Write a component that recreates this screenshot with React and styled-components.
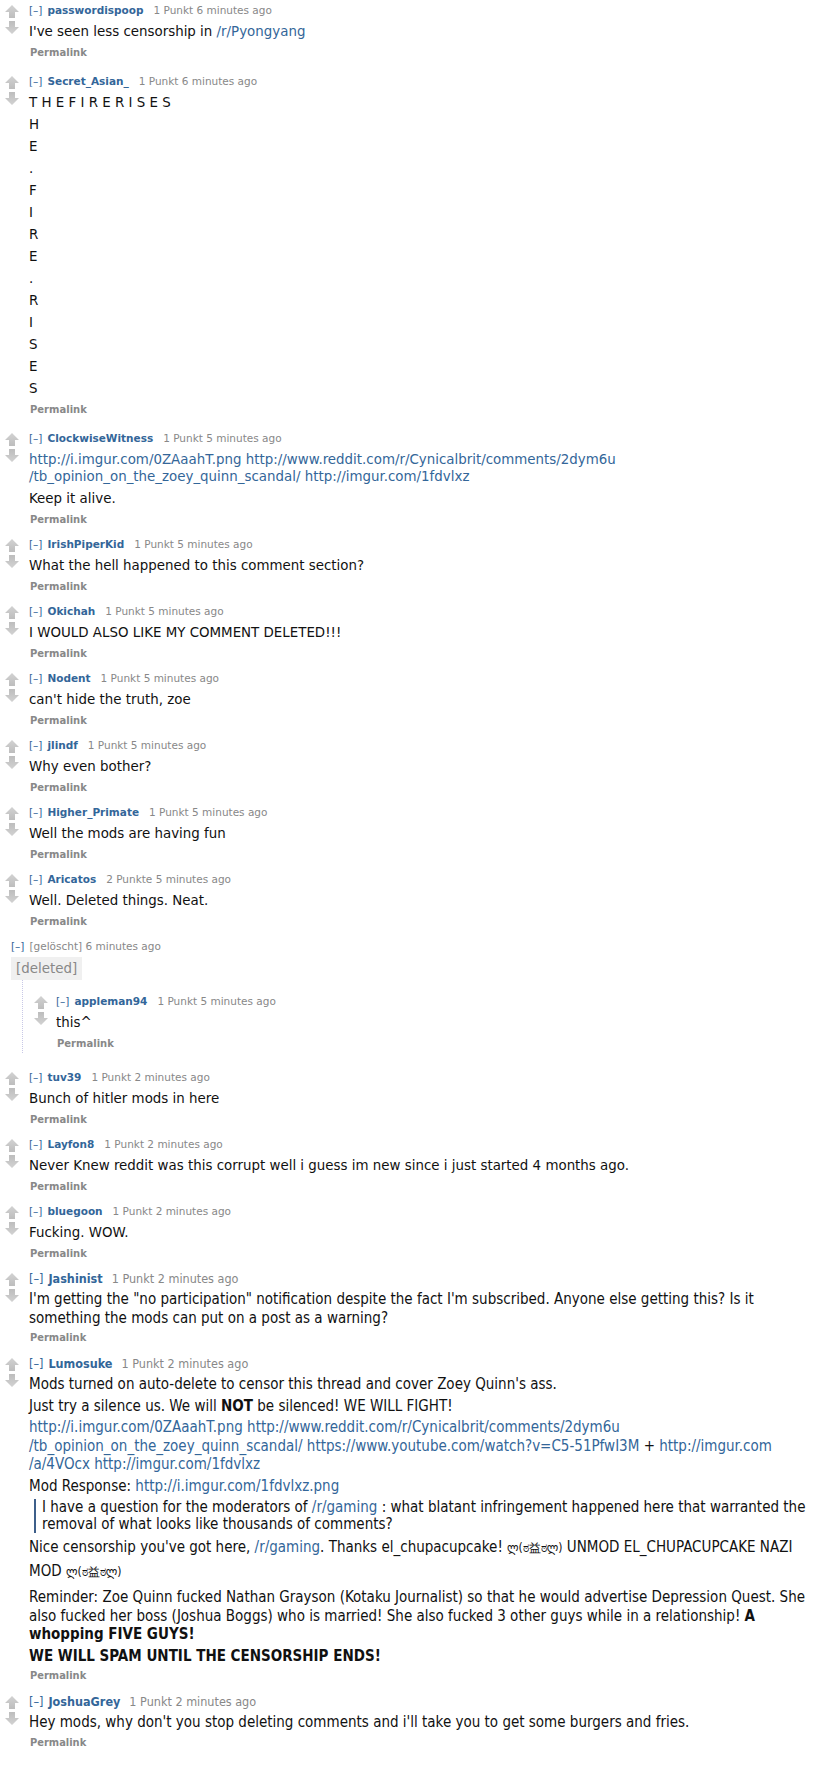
import React from "react"
import styled, { createGlobalStyle, css } from "styled-components"

const GlobalStyle = createGlobalStyle`
  body {
    margin: 0;
    background: #fff;
    font-family: "DejaVu Sans", Verdana, sans-serif;
  }
  a { color: #369; text-decoration: none; }
`

const narrowFont = css`
  font-family: "DejaVu Sans Condensed", "Liberation Sans Narrow", "DejaVu Sans", sans-serif;
  font-stretch: condensed;
`

const Thread = styled.div`
  padding: 3px 0 10px 5px;
  width: 810px;
`

const Row = styled.div`
  display: flex;
  gap: ${p => (p.$nested ? 8 : 10)}px;
  margin-bottom: ${p => p.$after}px;
`

const Votes = styled.div`
  display: flex;
  flex-direction: column;
  gap: 3px;
  width: 14px;
  padding-top: 2px;
  flex-shrink: 0;
`

const Entry = styled.div`
  flex: 1;
  ${p => p.$narrow && narrowFont}
`

const Tagline = styled.div`
  font-size: ${p => (p.$narrow ? 12.5 : 10.5)}px;
  line-height: ${p => (p.$narrow ? 16 : 15)}px;
  color: #888;
  white-space: nowrap;
`

const Toggle = styled.span`
  color: #369;
  margin-right: 5px;
`

const Author = styled.span`
  color: #369;
  font-weight: bold;
  margin-right: ${p => (p.$narrow ? 9 : 10)}px;
`

const Body = styled.div`
  font-size: ${p => (p.$narrow ? 15 : 13.4)}px;
  color: #111;
  max-width: 782px;
  p {
    margin: ${p => (p.$narrow ? 3 : 5)}px 0;
    line-height: ${p => (p.$narrow ? 18.5 : 17)}px;
  }
  strong { font-weight: bold; }
`

const Tall = styled.p`
  && { line-height: 23px; margin: 3px 0 4px; }
`

const Face = styled.span`
  font-size: 12px;
`

const Quote = styled.blockquote`
  margin: 4px 0 3px 5px;
  padding: 0 0 0 6px;
  border-left: 2px solid #3e5f8a;
  && p { margin: 0; line-height: 17px; }
`

const Permalink = styled.div`
  font-size: ${p => (p.$narrow ? 11 : 10)}px;
  line-height: 15px;
  font-weight: bold;
  color: #888;
  padding-left: 1px;
`

const Deleted = styled.div`
  margin: 0 0 0 6px;
`

const DeletedBody = styled.div`
  width: fit-content;
  margin-top: 3px;
  background: #f0f0f0;
  color: #888;
  font-size: 13.4px;
  line-height: 23px;
  padding: 0 5px;
`

const Children = styled.div`
  margin: 0 0 17px 17px;
  padding: 14px 0 2px 11px;
  border-left: 1px dotted #c8c8e6;
`

function Arrow({ down }) {
  const id = down ? "gd" : "gu"
  return (
    <svg width="14" height="13" viewBox="0 0 14 13">
      <defs>
        <linearGradient id={id} x1="0" y1="0" x2="0" y2="1">
          <stop offset="0" stopColor={down ? "#bdbdbd" : "#d2d2d2"} />
          <stop offset="1" stopColor={down ? "#d2d2d2" : "#bdbdbd"} />
        </linearGradient>
      </defs>
      <path
        d={down ? "M4 0 H10 V6 H14 L7 13 L0 6 H4 Z" : "M7 0 L14 7 H10 V13 H4 V7 H0 Z"}
        fill={`url(#${id})`}
      />
    </svg>
  )
}

function Comment({ author, points = "1 Punkt", time, children, after, narrow, nested }) {
  const gap = after ?? (narrow ? 11 : 10)
  return (
    <Row $after={gap} $nested={nested}>
      <Votes>
        <Arrow />
        <Arrow down />
      </Votes>
      <Entry $narrow={narrow}>
        <Tagline $narrow={narrow}>
          <Toggle>[–]</Toggle>
          <Author $narrow={narrow}>{author}</Author>
          {points} {time}
        </Tagline>
        <Body $narrow={narrow}>{children}</Body>
        <Permalink $narrow={narrow}>Permalink</Permalink>
      </Entry>
    </Row>
  )
}

const fire = "HE.FIRE.RISES".split("")
const face = "ლ(ಠ益ಠლ)"

export default function App() {
  return (
    <>
      <GlobalStyle />
      <Thread>
        <Comment author="passwordispoop" time="6 minutes ago" after={14}>
          <p>I've seen less censorship in <a href="#">/r/Pyongyang</a></p>
        </Comment>
        <Comment author="Secret_Asian_" time="6 minutes ago" after={14}>
          <p>T H E F I R E R I S E S</p>
          {fire.map((c, i) => (
            <p key={i}>{c}</p>
          ))}
        </Comment>
        <Comment author="ClockwiseWitness" time="5 minutes ago">
          <p>
            <a href="#">http://i.imgur.com/0ZAaahT.png</a>{" "}
            <a href="#">http://www.reddit.com/r/Cynicalbrit/comments/2dym6u<wbr />/tb_opinion_on_the_zoey_quinn_scandal/</a>{" "}
            <a href="#">http://imgur.com/1fdvlxz</a>
          </p>
          <p>Keep it alive.</p>
        </Comment>
        <Comment author="IrishPiperKid" time="5 minutes ago">
          <p>What the hell happened to this comment section?</p>
        </Comment>
        <Comment author="Okichah" time="5 minutes ago">
          <p>I WOULD ALSO LIKE MY COMMENT DELETED!!!</p>
        </Comment>
        <Comment author="Nodent" time="5 minutes ago">
          <p>can't hide the truth, zoe</p>
        </Comment>
        <Comment author="jlindf" time="5 minutes ago">
          <p>Why even bother?</p>
        </Comment>
        <Comment author="Higher_Primate" time="5 minutes ago">
          <p>Well the mods are having fun</p>
        </Comment>
        <Comment author="Aricatos" points="2 Punkte" time="5 minutes ago">
          <p>Well. Deleted things. Neat.</p>
        </Comment>

        <Deleted>
          <Tagline>
            <Toggle>[–]</Toggle>[gelöscht] 6 minutes ago
          </Tagline>
          <DeletedBody>[deleted]</DeletedBody>
        </Deleted>
        <Children>
          <Comment author="appleman94" time="5 minutes ago" after={0} nested>
            <p>this^</p>
          </Comment>
        </Children>

        <Comment author="tuv39" time="2 minutes ago">
          <p>Bunch of hitler mods in here</p>
        </Comment>
        <Comment author="Layfon8" time="2 minutes ago">
          <p>Never Knew reddit was this corrupt well i guess im new since i just started 4 months ago.</p>
        </Comment>
        <Comment author="bluegoon" time="2 minutes ago">
          <p>Fucking. WOW.</p>
        </Comment>
        <Comment author="Jashinist" time="2 minutes ago" narrow>
          <p>
            I'm getting the "no participation" notification despite the fact I'm subscribed. Anyone else
            getting this? Is it something the mods can put on a post as a warning?
          </p>
        </Comment>
        <Comment author="Lumosuke" time="2 minutes ago" narrow>
          <p>Mods turned on auto-delete to censor this thread and cover Zoey Quinn's ass.</p>
          <p>
            Just try a silence us. We will <strong>NOT</strong> be silenced! WE WILL FIGHT!
          </p>
          <p>
            <a href="#">http://i.imgur.com/0ZAaahT.png</a>{" "}
            <a href="#">http://www.reddit.com/r/Cynicalbrit/comments/2dym6u<wbr />/tb_opinion_on_the_zoey_quinn_scandal/</a>{" "}
            <a href="#">https://www.youtube.com/watch?v=C5-51PfwI3M</a> +{" "}
            <a href="#">http://imgur.com<wbr />/a/4VOcx</a> <a href="#">http://imgur.com/1fdvlxz</a>
          </p>
          <p>
            Mod Response: <a href="#">http://i.imgur.com/1fdvlxz.png</a>
          </p>
          <Quote>
            <p>
              I have a question for the moderators of <a href="#">/r/gaming</a> : what blatant infringement
              happened here that warranted the removal of what looks like thousands of comments?
            </p>
          </Quote>
          <Tall>
            Nice censorship you've got here, <a href="#">/r/gaming</a>. Thanks el_chupacupcake! <Face>{face}</Face>{" "}
            UNMOD EL_CHUPACUPCAKE NAZI MOD <Face>{face}</Face>
          </Tall>
          <p>
            Reminder: Zoe Quinn fucked Nathan Grayson (Kotaku Journalist) so that he would advertise Depression
            Quest. She also fucked her boss (Joshua Boggs) who is married! She also fucked 3 other guys while in a
            relationship! <strong>A whopping FIVE GUYS!</strong>
          </p>
          <p>
            <strong>WE WILL SPAM UNTIL THE CENSORSHIP ENDS!</strong>
          </p>
        </Comment>
        <Comment author="JoshuaGrey" time="2 minutes ago" narrow>
          <p>Hey mods, why don't you stop deleting comments and i'll take you to get some burgers and fries.</p>
        </Comment>
      </Thread>
    </>
  )
}
